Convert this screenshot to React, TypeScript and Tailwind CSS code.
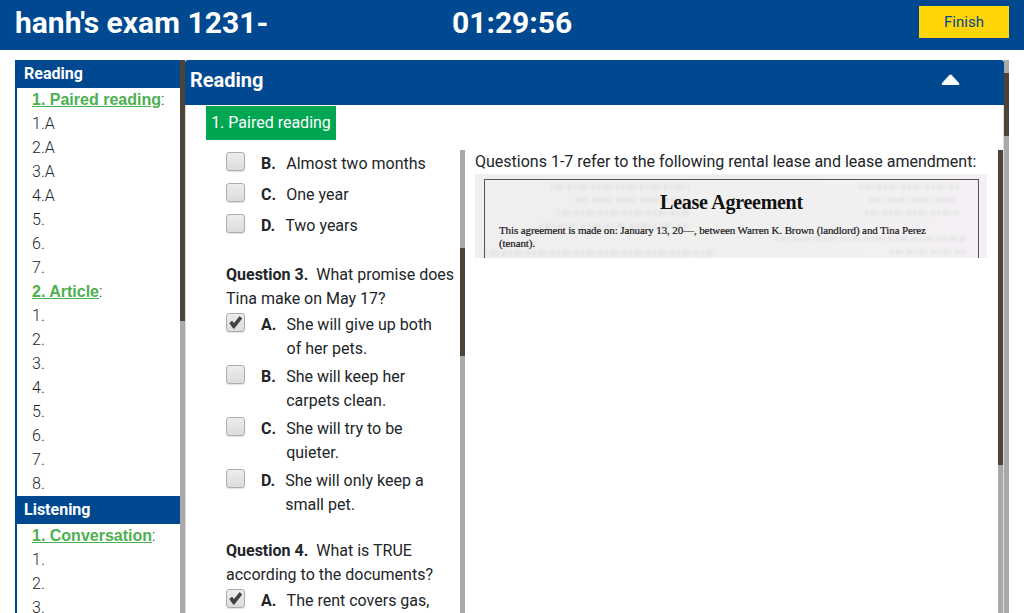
import React from "react";

type Section = { title: string; items: string[] };
type Option = { letter: string; lines: string[]; checked?: boolean };

const readingSections: Section[] = [
  { title: "1. Paired reading", items: ["1.A", "2.A", "3.A", "4.A", "5.", "6.", "7."] },
  { title: "2. Article", items: ["1.", "2.", "3.", "4.", "5.", "6.", "7.", "8."] },
];
const listeningSections: Section[] = [{ title: "1. Conversation", items: ["1.", "2.", "3."] }];

const q2: Option[] = [
  { letter: "B.", lines: ["Almost two months"] },
  { letter: "C.", lines: ["One year"] },
  { letter: "D.", lines: ["Two years"] },
];
const q3: Option[] = [
  { letter: "A.", lines: ["She will give up both", "of her pets."], checked: true },
  { letter: "B.", lines: ["She will keep her", "carpets clean."] },
  { letter: "C.", lines: ["She will try to be", "quieter."] },
  { letter: "D.", lines: ["She will only keep a", "small pet."] },
];
const q4: Option[] = [{ letter: "A.", lines: ["The rent covers gas,"], checked: true }];

const letterWidths: Record<string, string> = {
  "A.": "w-[25.6px]",
  "B.": "w-[25.2px]",
  "C.": "w-[25.2px]",
  "D.": "w-[24.2px]",
};

function SideHeading({ children }: { children: React.ReactNode }) {
  return <div className="h-7 shrink-0 bg-[#004990] pl-[7px] text-base leading-7 font-bold text-white">{children}</div>;
}

function SideSection({ title, items }: Section) {
  return (
    <div className="pl-[15px] text-base leading-6 font-light text-[#212529]">
      <div className="h-6 whitespace-nowrap">
        <a className="font-['Liberation_Sans',Arial,sans-serif] font-bold text-[#4caf50] underline">{title}</a>:
      </div>
      {items.map((item) => (
        <div key={item} className="h-6">{item}</div>
      ))}
    </div>
  );
}

function Checkbox({ checked }: { checked?: boolean }) {
  return (
    <span className="mt-[2px] flex size-[19px] shrink-0 items-center justify-center rounded-[3px] border border-[#adadad] bg-linear-to-b from-[#ededed] to-[#dcdcdc] shadow-[0_1px_1px_rgba(0,0,0,0.12)]">
      {checked && (
        <svg width="15" height="15" viewBox="0 0 15 15" className="shrink-0">
          <path d="M1.3 8 L4 5.8 L6 8.1 L11.7 1.1 L14.2 3.4 L6.4 13.5 L5.1 13.5 Z" fill="#424242" />
        </svg>
      )}
    </span>
  );
}

function OptionRow({ letter, lines, checked }: Option) {
  return (
    <div className="flex min-h-[31px] pb-[2px]">
      <Checkbox checked={checked} />
      <span className={`ml-4 shrink-0 pt-[2px] font-bold ${letterWidths[letter]}`}>{letter}</span>
      <span className="pt-[2px]">
        {lines.map((line) => (
          <span key={line} className="block whitespace-nowrap">{line}</span>
        ))}
      </span>
    </div>
  );
}

function Question({ n, lines, options }: { n: number; lines: string[]; options: Option[] }) {
  return (
    <div className="mt-5">
      <div className="whitespace-nowrap">
        <b>Question {n}.</b>&nbsp; {lines[0]}
      </div>
      <div className="whitespace-nowrap">{lines[1]}</div>
      {options.map((o) => <OptionRow key={o.letter} {...o} />)}
    </div>
  );
}

function ScanTexture() {
  return (
    <svg width="513" height="84" viewBox="0 0 513 84" className="absolute inset-0 blur-[1px]" fill="none" stroke="#c9cfc9" strokeWidth="5" strokeDasharray="3 2 6 1 2 3 5 2" opacity="0.3">
      <path d="M75 13H215M100 26H215M82 39H215M65 52H215M10 79H240M385 13H485M395 26H480M390 39H485M300 65H490M415 78H490" />
    </svg>
  );
}

export default function App() {
  return (
    <div className="flex h-[613px] w-[1024px] flex-col overflow-hidden bg-white font-[Roboto,sans-serif] text-[#212529]">
      <header className="flex h-[50px] shrink-0 bg-[#004990] px-[15px] text-white">
        <h1 className="w-[437px] pt-[5px] text-[30px] leading-9 font-bold">hanh's exam 1231-</h1>
        <div className="grow pt-[5px] text-[30px] leading-9 font-bold">01:29:56</div>
        <button className="mt-[6px] h-8 w-[90px] bg-[#ffd507] text-[15px] text-[#004990]">Finish</button>
      </header>

      <main className="mt-[10px] flex min-h-0 grow pl-[15px]">
        <aside className="flex w-[165px] shrink-0 flex-col overflow-hidden border-l-2 border-[#004990]">
          <SideHeading>Reading</SideHeading>
          {readingSections.map((s) => <SideSection key={s.title} {...s} />)}
          <SideHeading>Listening</SideHeading>
          {listeningSections.map((s) => <SideSection key={s.title} {...s} />)}
        </aside>
        <div className="w-[5px] shrink-0 bg-[#a9a9a9]">
          <div className="h-[261px] bg-[#4b4437]" />
        </div>

        <section className="flex w-[819px] shrink-0 flex-col rounded-t-[3px] border-x border-[#dcdcdc]">
          <div className="-mx-px flex h-[45px] shrink-0 items-start justify-between rounded-t-[3px] bg-[#004990] pr-[44px] pl-[5px] text-white">
            <h2 className="pt-[5px] text-xl leading-[30px] font-bold">Reading</h2>
            <svg width="19" height="12" viewBox="0 0 19 12" className="mt-[14px]">
              <path d="M1 9 L8.2 1.2 Q9.5 0 10.8 1.2 L18 9 Q19 11 17 11 L2 11 Q0 11 1 9 Z" fill="white" />
            </svg>
          </div>
          <div className="mt-px ml-5 flex h-[34px] w-[130px] shrink-0 items-center justify-center bg-[#00a651] text-base whitespace-nowrap text-white">
            1. Paired reading
          </div>
          <div className="mt-[10px] flex min-h-0 grow">
            <div className="ml-[40px] w-[234px] shrink-0 overflow-hidden text-base leading-6">
              {q2.map((o) => <OptionRow key={o.letter} {...o} />)}
              <Question n={3} lines={["What promise does", "Tina make on May 17?"]} options={q3} />
              <Question n={4} lines={["What is TRUE", "according to the documents?"]} options={q4} />
            </div>
            <div className="w-[5px] shrink-0 bg-[#a9a9a9] pt-[98px]">
              <div className="h-[108px] bg-[#4b4437]" />
            </div>
            <div className="w-[533px] shrink-0 pl-[10px]">
              <p className="h-6 text-base leading-6 whitespace-nowrap">
                Questions 1-7 refer to the following rental lease and lease amendment:
              </p>
              <div className="relative h-[84px] w-[512px] overflow-hidden bg-linear-to-r from-[#f0eeef] via-[#f0f0ef] to-[#f4f0f5] pt-[5px] pl-[9px]">
                <ScanTexture />
                <div className="relative h-[79px] w-[495px] border-x border-t border-[#555] pt-[10px] font-['Liberation_Serif',serif] text-[#111]">
                  <div className="text-center text-xl leading-6 font-bold tracking-[-0.27px] whitespace-nowrap">Lease Agreement</div>
                  <div className="mt-[10px] pl-[14px] text-[11px] leading-[13px] tracking-[-0.115px] whitespace-nowrap [-webkit-text-stroke:0.2px_#222]">
                    This agreement is made on: January 13, 20—, between Warren K. Brown (landlord) and Tina Perez
                    <br />
                    (tenant).
                  </div>
                </div>
              </div>
            </div>
            <div className="-mr-px w-[5px] shrink-0 bg-[#a9a9a9]">
              <div className="h-[315px] bg-[#4b4437]" />
            </div>
          </div>
        </section>
        <div className="w-[5px] shrink-0 bg-[#a9a9a9] pt-[13px]">
          <div className="h-[63px] bg-[#4b4437]" />
        </div>
      </main>
    </div>
  );
}
